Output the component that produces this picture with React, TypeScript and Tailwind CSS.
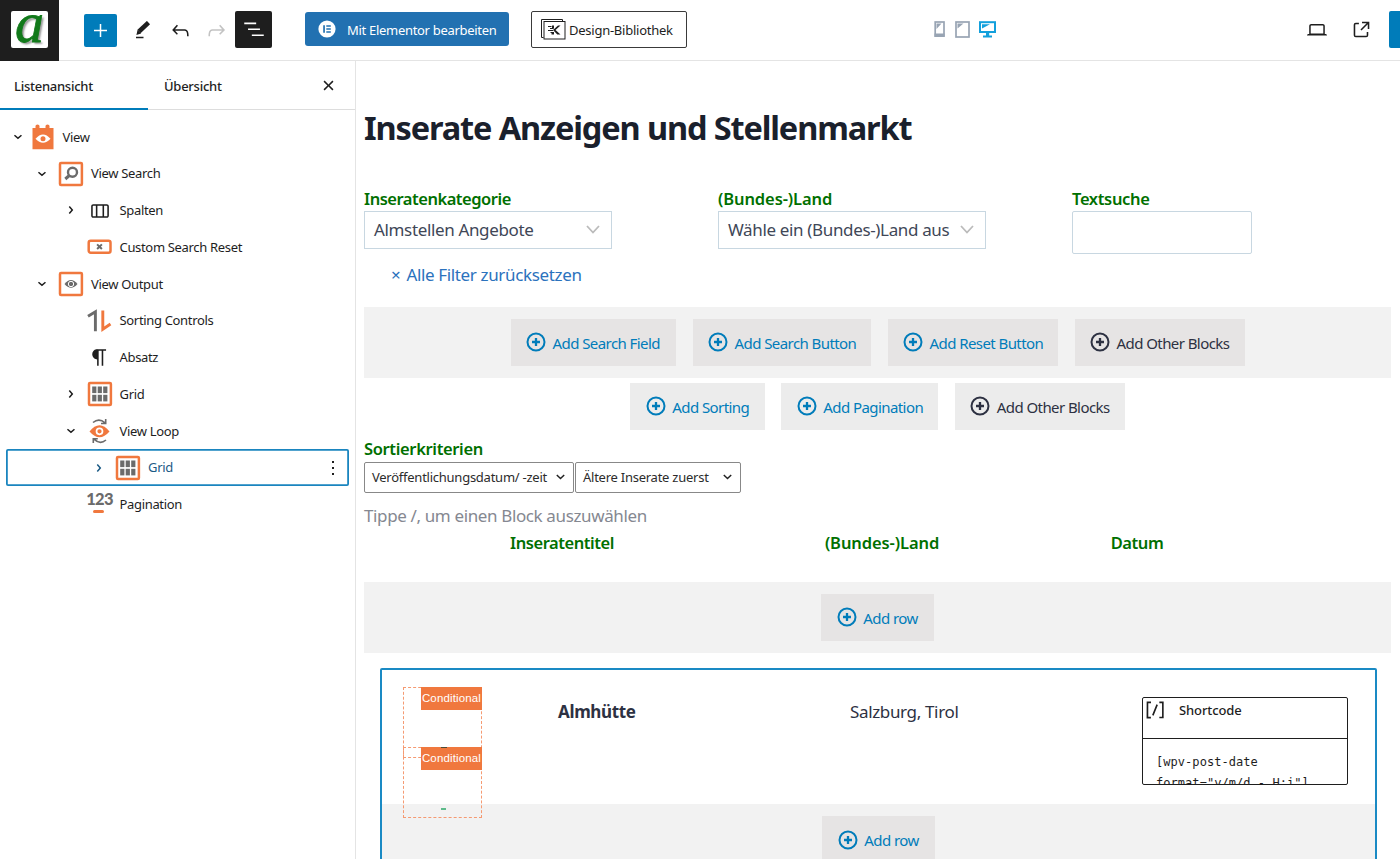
import type { ReactNode } from 'react';

const ORANGE = '#f0783e';
const GRAY = '#6b6b6b';

const paths = {
  undo: 'M18.3 11.7c-.6-.6-1.4-.9-2.3-.9H6.7l2.9-3.3-1.1-1-4.5 5L8.5 16l1-1-2.7-2.7H16c.5 0 .9.2 1.3.5 1 1 1 3.4 1 4.5v.3h1.5v-.2c0-1.5 0-4.3-1.5-5.7z',
  redo: 'M15.6 6.5l-1.1 1 2.9 3.3H8c-.9 0-1.7.3-2.3.9-1.4 1.5-1.4 4.2-1.4 5.6v.2h1.5v-.3c0-1.1 0-3.5 1-4.5.3-.3.7-.5 1.3-.5h9.2L14.5 15l1.1 1.1 4.6-4.6-4.6-5z',
  list: 'M3 6h11v1.5H3V6Zm3.5 5.5h11V13h-11v-1.5ZM21 17H10v1.5h11V17Z',
  external:
    'M19.5 4.5h-7V6h4.44l-5.97 5.97 1.06 1.06L18 7.06v4.44h1.5v-7Zm-13 1a2 2 0 0 0-2 2v10a2 2 0 0 0 2 2h10a2 2 0 0 0 2-2v-3H17v3a.5.5 0 0 1-.5.5h-10a.5.5 0 0 1-.5-.5v-10a.5.5 0 0 1 .5-.5h3V5.5h-3Z',
  laptop:
    'M20.5 16h-.7V8c0-1.1-.9-2-2-2H6.2c-1.1 0-2 .9-2 2v8h-.7c-.8 0-1.5.7-1.5 1.5h20c0-.8-.7-1.5-1.5-1.5zM5.7 8c0-.3.2-.5.5-.5h11.6c.3 0 .5.2.5.5v7.6H5.7V8z',
  chevron:
    'M10.8622 8.04053L14.2805 12.0286L10.8622 16.0167L9.72327 15.0405L12.3049 12.0286L9.72327 9.01672L10.8622 8.04053Z',
  close:
    'M12 13.06l3.712 3.713 1.061-1.06L13.061 12l3.712-3.712-1.06-1.06L12 10.938 8.288 7.227l-1.061 1.06L10.939 12l-3.712 3.712 1.06 1.061L12 13.061z',
  more: 'M13 19h-2v-2h2v2zm0-6h-2v-2h2v2zm0-6h-2V5h2v2z',
  columns:
    'M19 6H6c-1.1 0-2 .9-2 2v9c0 1.1.9 2 2 2h13c1.1 0 2-.9 2-2V8c0-1.1-.9-2-2-2zm-4.1 1.5v10H10v-10h4.9zM5.5 17V8c0-.3.2-.5.5-.5h2.5v10H6c-.3 0-.5-.2-.5-.5zm14 0c0 .3-.2.5-.5.5h-2.6v-10H19c.3 0 .5.2.5.5v9z',
  paragraph:
    'M18.3 4H9.9v-.1l-.9.2c-2.3.4-4 2.4-4 4.8s1.7 4.4 4 4.8l.7.1V20h1.5V5.5h2.9V20h1.5V5.5h2.7V4z',
  shortcode:
    'M16 4.2v1.5h2.5v12.5H16v1.5h4V4.2h-4zM4.2 19.8h4v-1.5H5.8V5.8h2.5V4.2h-4l-.1 15.6zm5.1-3.1l1.4.6 4-10-1.4-.6-4 10z',
};

function WpIcon({ name, size = 25, className = '' }: { name: keyof typeof paths; size?: number; className?: string }) {
  return (
    <svg width={size} height={size} viewBox="0 0 24 24" fill="currentColor" className={`shrink-0 ${className}`}>
      <path d={paths[name]} />
    </svg>
  );
}

function PlusCircle() {
  return (
    <svg width="20" height="20" viewBox="0 0 20 20" fill="none" stroke="currentColor" className="shrink-0">
      <circle cx="10" cy="10" r="8.5" strokeWidth="2" />
      <path d="M10 6v8M6 10h8" strokeWidth="2.3" />
    </svg>
  );
}

function ViewIcon() {
  return (
    <svg width="26" height="26" viewBox="0 0 26 26">
      <path d="M2.500 4h3V2q0-1.500 2-1.500t2 1.500v2h6V2q0-1.500 2-1.500t2 1.500v2H23.500v21.200H2.500z" fill={ORANGE} />
      <path d="M5.500 14.800q7.500-8.500 15 0q-7.500 8-15 0z" fill="#fff" />
      <circle cx="13" cy="14.800" r="2.500" fill={ORANGE} />
    </svg>
  );
}

function Framed({ children }: { children: ReactNode }) {
  return (
    <svg width="26" height="26" viewBox="0 0 26 26">
      <rect x="2" y="2" width="21.900" height="21.900" rx="1" fill="#fff" stroke={ORANGE} strokeWidth="2.500" />
      {children}
    </svg>
  );
}

function SearchIcon() {
  return (
    <Framed>
      <circle cx="14.500" cy="11.300" r="4.500" fill="none" stroke={GRAY} strokeWidth="2.400" />
      <path d="M11.300 14.500L7.300 18" stroke={GRAY} strokeWidth="3" />
    </Framed>
  );
}

function OutputIcon() {
  return (
    <Framed>
      <path d="M6.500 13q6.500-8 13 0q-6.500 7.500-13 0z" fill={GRAY} />
      <circle cx="13" cy="13" r="2.700" fill={GRAY} stroke="#fff" strokeWidth="1" />
    </Framed>
  );
}

function GridIcon() {
  return (
    <Framed>
      {[5.2, 10.7, 16.2].map((x) => (
        <g key={x} fill={GRAY}>
          <rect x={x} y="5.500" width="4.200" height="6.600" />
          <rect x={x} y="13.800" width="4.200" height="6.600" />
        </g>
      ))}
    </Framed>
  );
}

function ResetIcon() {
  return (
    <svg width="26" height="26" viewBox="0 0 26 26">
      <rect x="1.700" y="6.700" width="21.800" height="12" rx="2" fill="#fff" stroke={ORANGE} strokeWidth="2.500" />
      <path d="M10.100 10.400l4.800 4.600m0-4.600l-4.800 4.600" stroke={GRAY} strokeWidth="2" />
    </svg>
  );
}

function SortIcon() {
  return (
    <svg width="26" height="26" viewBox="0 0 26 26" fill="none" strokeWidth="2.900">
      <path d="M1 8.300L8.400 3.800v19.500" stroke={GRAY} />
      <path d="M15.800 2.500v18.700l7.700-5.200" stroke={ORANGE} />
    </svg>
  );
}

function LoopIcon() {
  return (
    <svg width="26" height="26" viewBox="0 0 26 26">
      <path d="M2.500 13.500q10-12.500 20 0q-10 11.500-20 0z" fill={ORANGE} />
      <circle cx="12.500" cy="13.300" r="3" fill={ORANGE} stroke="#fff" strokeWidth="1.700" />
      <g fill="none" stroke={GRAY} strokeWidth="1.600">
        <path d="M6 4.500q6-5 12 .3M18.700 1v4.500h-4.700" />
        <path d="M19 22q-6 5-12-.8M6.300 25v-4.200h4.500" />
      </g>
    </svg>
  );
}

function PaginationIcon() {
  return (
    <div className="flex h-[26px] w-[26px] flex-col items-center">
      <span className="h-[17px] font-['Lato'] text-[16.5px]/[17px] font-black tracking-[-0.7px] text-[#6b6b6b]">123</span>
      <span className="mt-[2px] mr-[3px] h-[2.5px] w-[11px] rounded-full bg-[#f0783e]" />
    </div>
  );
}

const tree = [
  { label: 'View', indent: 'pl-[5.500px]', open: true, icon: <ViewIcon />, root: true },
  { label: 'View Search', indent: 'pl-[30px]', open: true, icon: <SearchIcon /> },
  { label: 'Spalten', indent: 'pl-[58.500px]', open: false, icon: <WpIcon name="columns" /> },
  { label: 'Custom Search Reset', indent: 'pl-[58.500px]', icon: <ResetIcon /> },
  { label: 'View Output', indent: 'pl-[30px]', open: true, icon: <OutputIcon /> },
  { label: 'Sorting Controls', indent: 'pl-[58.500px]', icon: <SortIcon /> },
  { label: 'Absatz', indent: 'pl-[58.500px]', icon: <WpIcon name="paragraph" /> },
  { label: 'Grid', indent: 'pl-[58.500px]', open: false, icon: <GridIcon /> },
  { label: 'View Loop', indent: 'pl-[58.500px]', open: true, icon: <LoopIcon /> },
  { label: 'Grid', indent: 'pl-[81.500px]', open: false, icon: <GridIcon />, selected: true },
  { label: 'Pagination', indent: 'pl-[58.500px]', icon: <PaginationIcon /> },
];

function TopBar() {
  return (
    <header className="flex h-[61px] shrink-0 items-center border-b border-[#e4e4e4] text-[#1e1e1e]">
      <div className="flex h-[61px] w-[59px] shrink-0 items-center justify-center bg-[#1e1e1e]">
        <div className="mb-[2px] flex h-[37px] w-[37px] items-end justify-center rounded-[2px] bg-white">
          <span className="h-[54px] font-['Liberation_Serif'] text-[58px]/[58px] text-[#11791a] italic [-webkit-text-stroke:0.8px_#11791a] [text-shadow:2px_2px_2px_#999]">
            a
          </span>
        </div>
      </div>
      <button className="ml-[25px] flex h-[33px] w-[33px] shrink-0 items-center justify-center rounded-[2px] bg-[#007cba]">
        <svg width="13" height="13" viewBox="0 0 13 13" stroke="#fff" strokeWidth="1.500">
          <path d="M6.500 0v13M0 6.500h13" />
        </svg>
      </button>
      <svg width="18" height="18" viewBox="0 0 18 18" className="ml-[17px] shrink-0">
        <path d="M14.500 1.600L5 10.500" stroke="#1e1e1e" strokeWidth="4.600" />
        <path d="M3.600 8.800l3.500 3.600-4.700 1.600z" fill="#1e1e1e" />
        <path d="M2 16.500h7.500" stroke="#1e1e1e" strokeWidth="1.500" />
      </svg>
      <WpIcon name="undo" className="ml-[16px]" />
      <WpIcon name="redo" className="ml-[11px] text-[#c3c3c3]" />
      <button className="mb-[2px] ml-[6px] flex h-[37px] w-[37px] shrink-0 items-center justify-center rounded-[2px] bg-[#1e1e1e] text-white">
        <WpIcon name="list" size={26} />
      </button>
      <button className="mb-[2px] ml-[33px] flex h-[34px] w-[204px] shrink-0 items-center rounded-[3px] bg-[#2271b1] pl-[13px] text-[13px] tracking-[-0.3px] text-white">
        <svg width="18" height="18" viewBox="0 0 18 18" className="mr-[11px] shrink-0">
          <circle cx="9" cy="9" r="8.600" fill="#fff" />
          <path d="M5.200 5.300h1.700v7.400H5.200zM8.300 5.300h4.500v1.500H8.300zM8.300 8.200h4.500v1.500H8.300zM8.300 11.200h4.500v1.500H8.300z" fill="#2271b1" />
        </svg>
        <span className="mt-[3px]">Mit Elementor bearbeiten</span>
      </button>
      <button className="mb-[2px] ml-[22px] flex h-[37px] w-[156px] shrink-0 items-center rounded-[2px] border border-[#3a3a3a] pl-[9px] text-[13px] tracking-[-0.25px]">
        <svg width="25" height="21" viewBox="0 0 25 21" fill="none" stroke="#1e1e1e" className="mr-[3px] shrink-0">
          <path d="M2.500 18.500h-2v-18h21v2" />
          <rect x="3" y="2.500" width="21" height="17.500" />
          <path d="M7 7.500h3.500M9 9.500h3.500M7 11.500h5M9.500 13.500h3" strokeWidth="1" />
          <path d="M12 11l5-4.500h2.500L14.500 11l5 4.500h-3.200z" fill="#1e1e1e" stroke="none" />
          <path d="M11 6.500h2v3h-2zM10.500 13h2.500v2.500h-2.500z" fill="#1e1e1e" stroke="none" />
        </svg>
        <span className="mt-[3px]">Design-Bibliothek</span>
      </button>
      <div className="mb-[2px] ml-[247px] flex items-center gap-[9px]">
        <svg width="12" height="17" viewBox="0 0 12 17">
          <rect x="1.200" y="1" width="8.800" height="14" fill="#fff" stroke="#98a4b3" strokeWidth="1.700" />
          <path d="M.5 12.500h10V16H.5zM2.500 2.500h5l-5 5.500z" fill="#98a4b3" />
        </svg>
        <svg width="15" height="17" viewBox="0 0 15 17">
          <rect x="1" y="1" width="13" height="15" fill="#fff" stroke="#98a4b3" strokeWidth="1.700" />
          <path d="M2.500 2.500h6l-6 5z" fill="#98a4b3" />
        </svg>
        <svg width="17" height="17" viewBox="0 0 17 17">
          <rect x="1" y="1.200" width="15" height="9.800" fill="#fff" stroke="#13a0dc" strokeWidth="2" />
          <path d="M3 3.200h8L3 7.500zM7 11.500h3.200v3H13V16.500H4v-2h3z" fill="#13a0dc" />
        </svg>
      </div>
      <WpIcon name="laptop" size={24} className="mb-px ml-[309px]" />
      <WpIcon name="external" size={25} className="mb-px ml-5" />
      <div className="mb-[2px] ml-auto h-[37px] w-[11px] rounded-l-[2px] bg-[#007cba]" />
    </header>
  );
}

function Sidebar() {
  return (
    <aside className="w-[356px] shrink-0 border-r border-[#e4e4e4] text-[#1e1e1e]">
      <div className="flex h-[49px] items-stretch border-b border-[#ddd] text-[13px] font-medium tracking-[-0.02em]">
        <div className="-mb-px flex w-[148px] items-center border-b-2 border-[#007cba] pl-[14px] pt-[4px]">Listenansicht</div>
        <div className="flex flex-1 items-center pl-[16px] pt-[3px]">Übersicht</div>
        <div className="flex items-center pr-[14px]">
          <WpIcon name="close" size={25} />
        </div>
      </div>
      <div className="pt-[8.5px]">
        {tree.map((row, i) => (
          <div
            key={i}
            className={`flex h-[36.75px] items-center text-[13px] tracking-[-0.33px] ${row.indent} ${
              row.selected ? 'ml-[5.500px] mr-[6px] rounded-[2px] text-[#1a5a85] ring-[1.8px] ring-[#1a85bf] ring-inset' : ''
            }`}
          >
            <div className="flex w-7 shrink-0">
              {row.open !== undefined && <WpIcon name="chevron" size={24} className={row.open ? 'rotate-90' : ''} />}
            </div>
            <div className={`flex w-[26px] shrink-0 items-center justify-center ${row.root ? '-ml-1' : ''}`}>{row.icon}</div>
            <span className="mt-px ml-[7px]">{row.label}</span>
            {row.selected && <WpIcon name="more" size={24} className="mr-[4px] ml-auto text-[#1e1e1e]" />}
          </div>
        ))}
      </div>
    </aside>
  );
}

function AddButton({ label, size, dark, light }: { label: string; size: string; dark?: boolean; light?: boolean }) {
  return (
    <button
      className={`flex h-[47px] shrink-0 items-center gap-[6.500px] pl-[15.5px] text-[15px] tracking-[-0.57px] whitespace-nowrap ${size} ${
        light ? 'bg-[#ececec]' : 'bg-[#e6e4e4]'
      } ${dark ? 'text-[#2d3142]' : 'text-[#007cba]'}`}
    >
      <PlusCircle />
      <span className="mt-[2px]">{label}</span>
    </button>
  );
}

function FieldSelect({ value, size }: { value: string; size: string }) {
  return (
    <div className={`flex h-[37.500px] items-center justify-between border border-[#c8d7e1] pr-[11px] pl-[9px] text-[17px] tracking-[-0.35px] whitespace-nowrap text-[#404757] ${size}`}>
      <span className="mt-px">{value}</span>
      <svg width="14" height="9" viewBox="0 0 14 9" fill="none" stroke="#bbb" strokeWidth="1.800">
        <path d="M1 1l6 6.500L13 1" />
      </svg>
    </div>
  );
}

function SortSelect({ value, size }: { value: string; size: string }) {
  return (
    <div className={`flex h-[31px] items-center justify-between rounded-[2px] border border-[#888] pr-[8px] pl-[7px] text-[13px] tracking-[-0.25px] whitespace-nowrap text-[#2c2c2c] ${size}`}>
      <span className="mt-px">{value}</span>
      <svg width="9" height="6" viewBox="0 0 9 6" fill="none" stroke="#222" strokeWidth="1.500">
        <path d="M.8 1l3.700 3.500L8.200 1" />
      </svg>
    </div>
  );
}

function Conditional({ className }: { className: string }) {
  return (
    <div className={`flex items-start justify-end border border-dashed border-[#f59a72] ${className}`}>
      <span className="-mt-px -mr-px flex h-[23px] w-[61px] items-center justify-center bg-[#f0783e] pt-px font-['Liberation_Sans'] text-[11.5px] tracking-[0.15px] text-white">
        Conditional
      </span>
    </div>
  );
}

function Editor() {
  return (
    <main className="min-w-0 flex-1 pl-2 text-[#2d3142]">
      <h1 className="mt-[42px] h-[50px] text-[32.5px]/[50px] font-bold tracking-[-1.12px] whitespace-nowrap text-[#1a202c]">
        Inserate Anzeigen und Stellenmarkt
      </h1>

      <div className="mt-[34px] flex text-[16.5px]/[24px] font-semibold tracking-[-0.48px] text-[#007000]">
        <div className="w-[354px]">
          <div className="h-6">Inseratenkategorie</div>
          <div className="font-normal"><FieldSelect value="Almstellen Angebote" size="w-[248px]" /></div>
        </div>
        <div className="w-[354px]">
          <div className="h-6 tracking-[-0.1px]">(Bundes-)Land</div>
          <div className="font-normal"><FieldSelect value="Wähle ein (Bundes-)Land aus" size="w-[268px]" /></div>
        </div>
        <div>
          <div className="h-6 tracking-[-0.35px]">Textsuche</div>
          <div className="h-[43px] w-[180px] rounded-[2px] border border-[#c8d7e1]" />
        </div>
      </div>
      <div className="mt-[8.5px] flex h-6 gap-[6px] pl-[27px] text-[17px]/[24px] tracking-[-0.35px] text-[#2b72bd]">
        <span>×</span>
        <span>Alle Filter zurücksetzen</span>
      </div>

      <div className="mt-[20px] mr-[9px] flex h-[71px] items-center justify-center gap-[16.500px] bg-[#f2f2f2]">
        <AddButton label="Add Search Field" size="w-[165.500px]" />
        <AddButton label="Add Search Button" size="w-[178.500px]" />
        <AddButton label="Add Reset Button" size="w-[170.500px]" />
        <AddButton label="Add Other Blocks" size="w-[170px]" dark />
      </div>
      <div className="mt-[5px] mr-[9px] flex justify-center gap-[16.500px]">
        <AddButton label="Add Sorting" size="w-[134.500px]" light />
        <AddButton label="Add Pagination" size="w-[157px]" light />
        <AddButton label="Add Other Blocks" size="w-[170px]" dark light />
      </div>

      <div className="mt-[7px] h-6 text-[16.5px]/[24px] font-semibold tracking-[-0.35px] text-[#007000]">Sortierkriterien</div>
      <div className="mt-px flex gap-px">
        <SortSelect value="Veröffentlichungsdatum/ -zeit" size="w-[210px]" />
        <SortSelect value="Ältere Inserate zuerst" size="w-[166px]" />
      </div>
      <div className="mt-[11px] h-6 text-[17px]/[24px] tracking-[-0.37px] text-[#858891]">Tippe /, um einen Block auszuwählen</div>
      <div className="mt-[3px] flex h-6 text-center text-[16.5px]/[24px] font-semibold tracking-[-0.45px] text-[#007000]">
        <div className="ml-[98px] w-[200px]">Inseratentitel</div>
        <div className="ml-[120px] w-[200px] tracking-[-0.1px]">(Bundes-)Land</div>
        <div className="ml-[55px] w-[200px]">Datum</div>
      </div>

      <div className="mt-[27px] mr-[9px] flex h-[71px] items-center justify-center bg-[#f2f2f2]">
        <AddButton label="Add row" size="w-[112.500px]" />
      </div>

      <div className="mt-[15px] ml-4 h-[220px] w-[997px] rounded-[2px] border-2 border-[#1a8ac4] text-[17px] tracking-[-0.35px]">
        <div className="flex h-[134px] pt-[17px] pl-[21px]">
          <div className="relative z-10 h-[131px] w-[79px] shrink-0">
            <Conditional className="h-[71px] w-[79px]" />
            <Conditional className="absolute top-[60px] h-[71px] w-[79px]" />
            <span className="absolute top-[121.500px] left-[38px] h-[2px] w-[5px] bg-[#5fbb8b]" />
            <span className="absolute top-[60px] left-[38px] h-px w-[6px] bg-[#4f4a33]" />
          </div>
          <div className="mt-[12.500px] ml-[76px] w-[292px] font-bold">Almhütte</div>
          <div className="mt-[12.500px] w-[292px]">Salzburg, Tirol</div>
          <div className="mt-[10.500px] h-[88px] w-[206px] overflow-hidden rounded-[2px] border border-[#1e1e1e] text-[#1e1e1e]">
            <div className="flex h-[41px] items-start border-b border-[#1e1e1e] text-[13px]/[24px] font-medium tracking-[-0.1px]">
              <WpIcon name="shortcode" size={26} className="-mt-px -ml-px mr-[11px]" />
              Shortcode
            </div>
            <div className="w-[180px] pt-[13px] pl-[13px] font-['DejaVu_Sans_Mono'] text-[12px]/[21px] tracking-[0.05px] whitespace-pre">
              {'[wpv-post-date\nformat="y/m/d - H:i"]'}
            </div>
          </div>
        </div>
        <div className="flex h-[84px] justify-center bg-[#f2f2f2] pt-[12.500px]">
          <AddButton label="Add row" size="w-[112.500px]" />
        </div>
      </div>
    </main>
  );
}

export default function App() {
  return (
    <div className="flex h-[859px] w-[1400px] flex-col overflow-hidden bg-white font-['Noto_Sans',sans-serif]">
      <TopBar />
      <div className="flex min-h-0 flex-1">
        <Sidebar />
        <Editor />
      </div>
    </div>
  );
}
